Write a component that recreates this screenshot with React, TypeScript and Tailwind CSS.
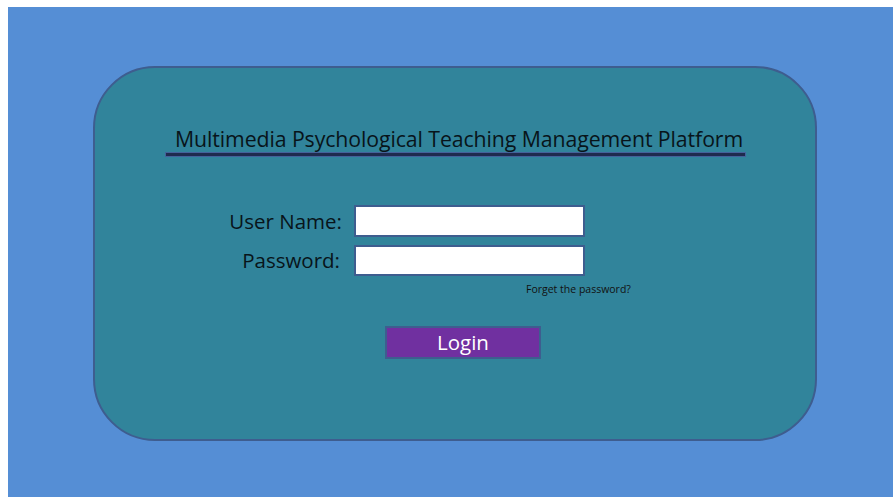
import React from "react";

const font = { fontFamily: '"Open Sans", "Liberation Sans", sans-serif' };

export default function App() {
  return (
    <div className="w-[893px] h-[497px] bg-white pl-[8px] pt-[7px]" style={font}>
      <div className="w-full h-full bg-[#558ed5] pl-[85px] pt-[59px]">
        <div className="w-[724px] h-[375px] rounded-[62px] border-2 border-[#3e5d8f] bg-[#31849b] flex flex-col">
          {/* title with double rule underneath */}
          <div className="ml-[70px] mt-[57px] w-[581px]">
            <div className="pl-[10px] text-[21.3px] leading-[27px] text-[#08141a] tracking-[-0.1px] whitespace-nowrap">
              Multimedia Psychological Teaching Management Platform
            </div>
            <div className="h-[5px] bg-[#1f2b4e] border border-[#44629a]" />
          </div>

          <form className="mt-[48px] flex flex-col gap-[8px]" onSubmit={(e) => e.preventDefault()}>
            <div className="flex items-center">
              <label className="w-[259px] pr-[12px] text-right text-[20.5px] text-[#08141a]">User Name:</label>
              <input className="w-[231px] h-[32px] bg-white border-2 border-[#3e5d8f] outline-none px-1" />
            </div>
            <div className="flex items-center">
              <label className="w-[259px] pr-[14px] text-right text-[20.5px] text-[#08141a]">Password:</label>
              <input type="password" className="w-[231px] h-[31px] bg-white border-2 border-[#3e5d8f] outline-none px-1" />
            </div>
            <div className="ml-[431px] -mt-[2px] text-[10.5px] leading-[14px] text-[#111]">Forget the password?</div>

            <button
              type="submit"
              className="ml-[290px] mt-[22px] w-[156px] h-[33px] bg-[#7030a0] border-2 border-[#3e5d8f] text-white text-[20.5px] leading-none"
            >
              Login
            </button>
          </form>
        </div>
      </div>
    </div>
  );
}
